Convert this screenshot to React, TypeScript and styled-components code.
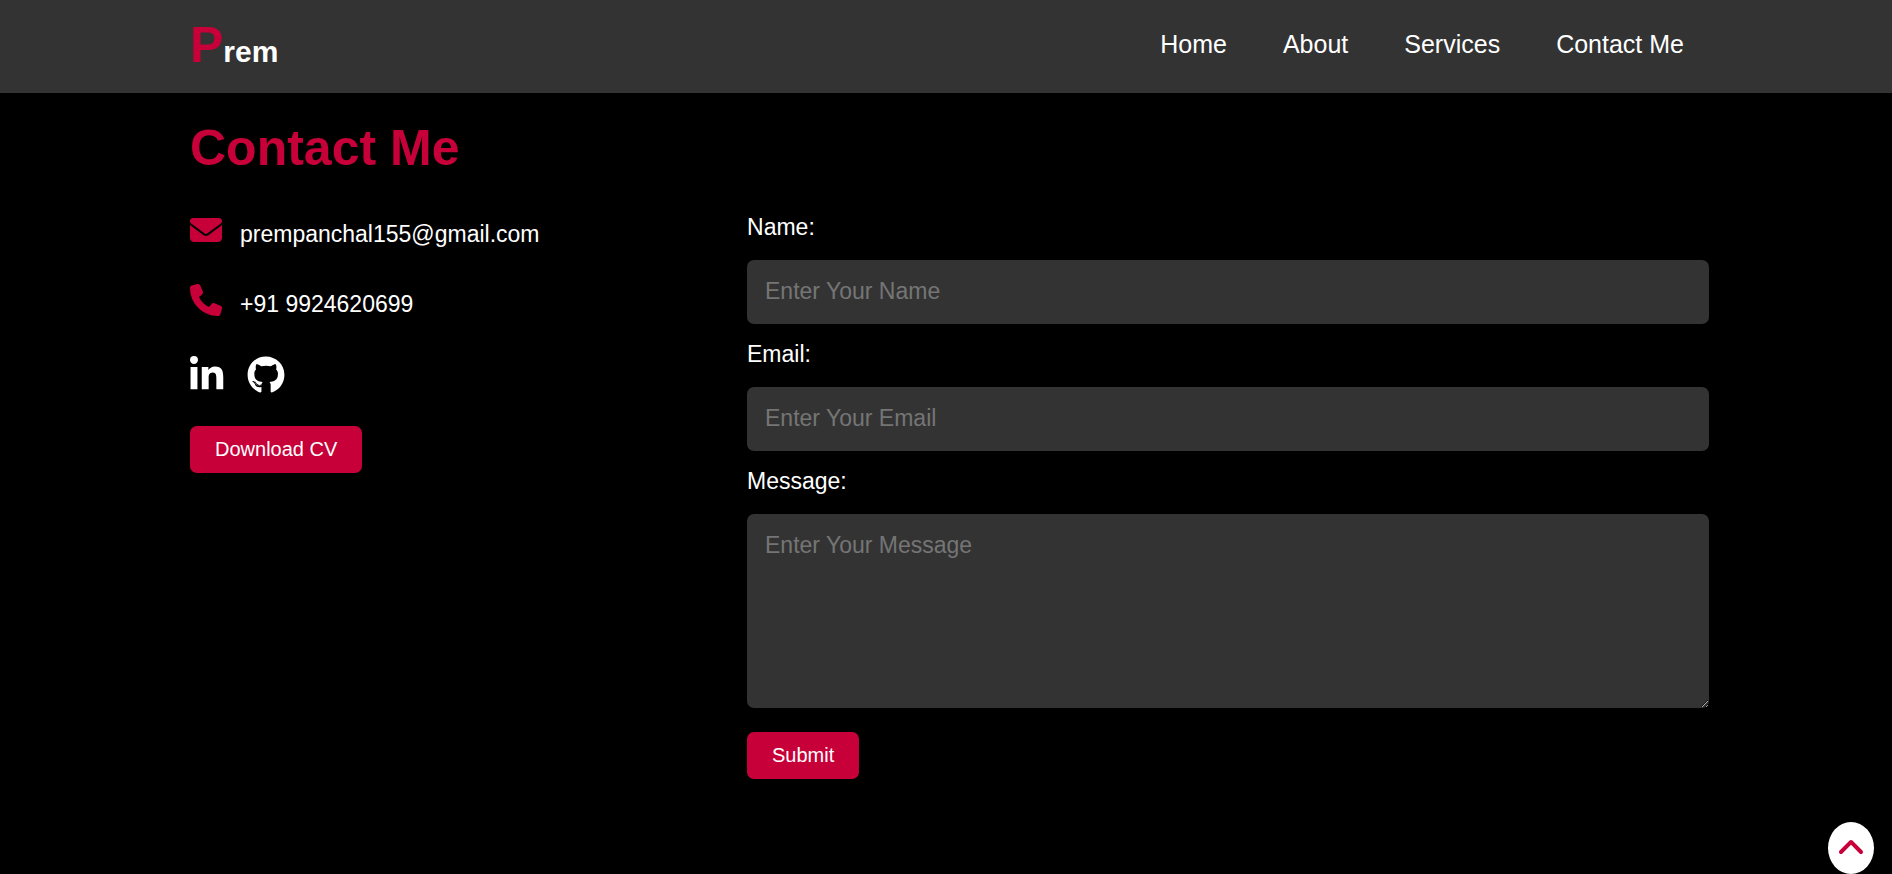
import React from 'react';
import styled, { createGlobalStyle } from 'styled-components';
import { FaEnvelope, FaPhone, FaLinkedinIn, FaGithub, FaAngleUp } from 'react-icons/fa6';

const font = '"Liberation Sans", Arial, sans-serif';
const accent = '#c70039';
const gutters = '0 183px 0 190px';

const GlobalStyle = createGlobalStyle`
  * { margin: 0; padding: 0; box-sizing: border-box; }
  body { background: #000; color: #fff; font-family: ${font}; }
`;
const Header = styled.header`
  background: #333;
  padding: ${gutters};
  display: flex;
  justify-content: space-between;
`;
const Logo = styled.a`
  padding: 20px 0 13px;
  color: #fff;
  text-decoration: none;
  font-size: 30px;
  font-weight: 700;
  line-height: 57px;
`;
const Initial = styled.span`
  color: ${accent};
  font-size: 50px;
  line-height: 50px;
`;
const Nav = styled.nav`
  display: flex;
  gap: 56px;
  padding: 20px 25px 0 0;
`;
const NavLink = styled.a`
  color: #fff;
  text-decoration: none;
  font-size: 25px;
  line-height: 48px;
`;
const Main = styled.main`
  padding: ${gutters};
`;
const Title = styled.h1`
  color: ${accent};
  font-size: 50px;
  line-height: 60px;
  padding-top: 25px;
`;
const Columns = styled.div`
  display: flex;
  justify-content: space-between;
`;
const Details = styled.div`
  flex-basis: 35%;
  padding-top: 36px;
`;
const Detail = styled.p`
  display: flex;
  gap: 18px;
  padding-bottom: 30px;
  font-size: 23px;
  line-height: 40px;
  svg { color: ${accent}; font-size: 32px; }
`;
const Social = styled.div`
  display: flex;
  gap: 19px;
  padding: 2px 0 32px;
`;
const SocialLink = styled.a`
  display: flex;
  color: #fff;
  font-size: 38px;
`;
const Button = styled.button`
  background: ${accent};
  color: #fff;
  border: 0;
  border-radius: 7px;
  padding: 12px 25px;
  font: 20px/23px ${font};
`;
const Form = styled.form`
  flex-basis: 63.33%;
  padding-top: 37px;
`;
const Label = styled.label`
  display: block;
  font-size: 23px;
  line-height: 24px;
`;
const Input = styled.input`
  display: block;
  width: 100%;
  margin: 21px 0 18px;
  padding: 18px 18px 20px;
  height: 64px;
  border: 0;
  border-radius: 7px;
  background: #333;
  color: #fff;
  font: 23px/26px ${font};
`;
const TextArea = styled(Input)`
  height: 194px;
  margin-bottom: 24px;
`;
const ToTop = styled.button`
  position: fixed;
  right: 18px;
  bottom: 0;
  width: 46px;
  height: 52px;
  display: flex;
  align-items: center;
  justify-content: center;
  border: 0;
  border-radius: 50%;
  background: #fff;
  color: ${accent};
  font-size: 32px;
`;

export default function App() {
  return (
    <>
      <GlobalStyle />
      <Header>
        <Logo href="#home"><Initial>P</Initial>rem</Logo>
        <Nav>
          <NavLink href="#home">Home</NavLink>
          <NavLink href="#about">About</NavLink>
          <NavLink href="#services">Services</NavLink>
          <NavLink href="#contact">Contact Me</NavLink>
        </Nav>
      </Header>
      <Main id="contact">
        <Title>Contact Me</Title>
        <Columns>
          <Details>
            <Detail><FaEnvelope />prempanchal155@gmail.com</Detail>
            <Detail><FaPhone />+91 9924620699</Detail>
            <Social>
              <SocialLink href="#linkedin" aria-label="LinkedIn"><FaLinkedinIn preserveAspectRatio="xMinYMid meet" /></SocialLink>
              <SocialLink href="#github" aria-label="GitHub"><FaGithub /></SocialLink>
            </Social>
            <Button type="button">Download CV</Button>
          </Details>
          <Form>
            <Label htmlFor="name">Name:</Label>
            <Input id="name" placeholder="Enter Your Name" />
            <Label htmlFor="email">Email:</Label>
            <Input id="email" type="email" placeholder="Enter Your Email" />
            <Label htmlFor="message">Message:</Label>
            <TextArea as="textarea" id="message" placeholder="Enter Your Message" />
            <Button type="submit">Submit</Button>
          </Form>
        </Columns>
      </Main>
      <ToTop type="button" aria-label="Back to top"><FaAngleUp /></ToTop>
    </>
  );
}
